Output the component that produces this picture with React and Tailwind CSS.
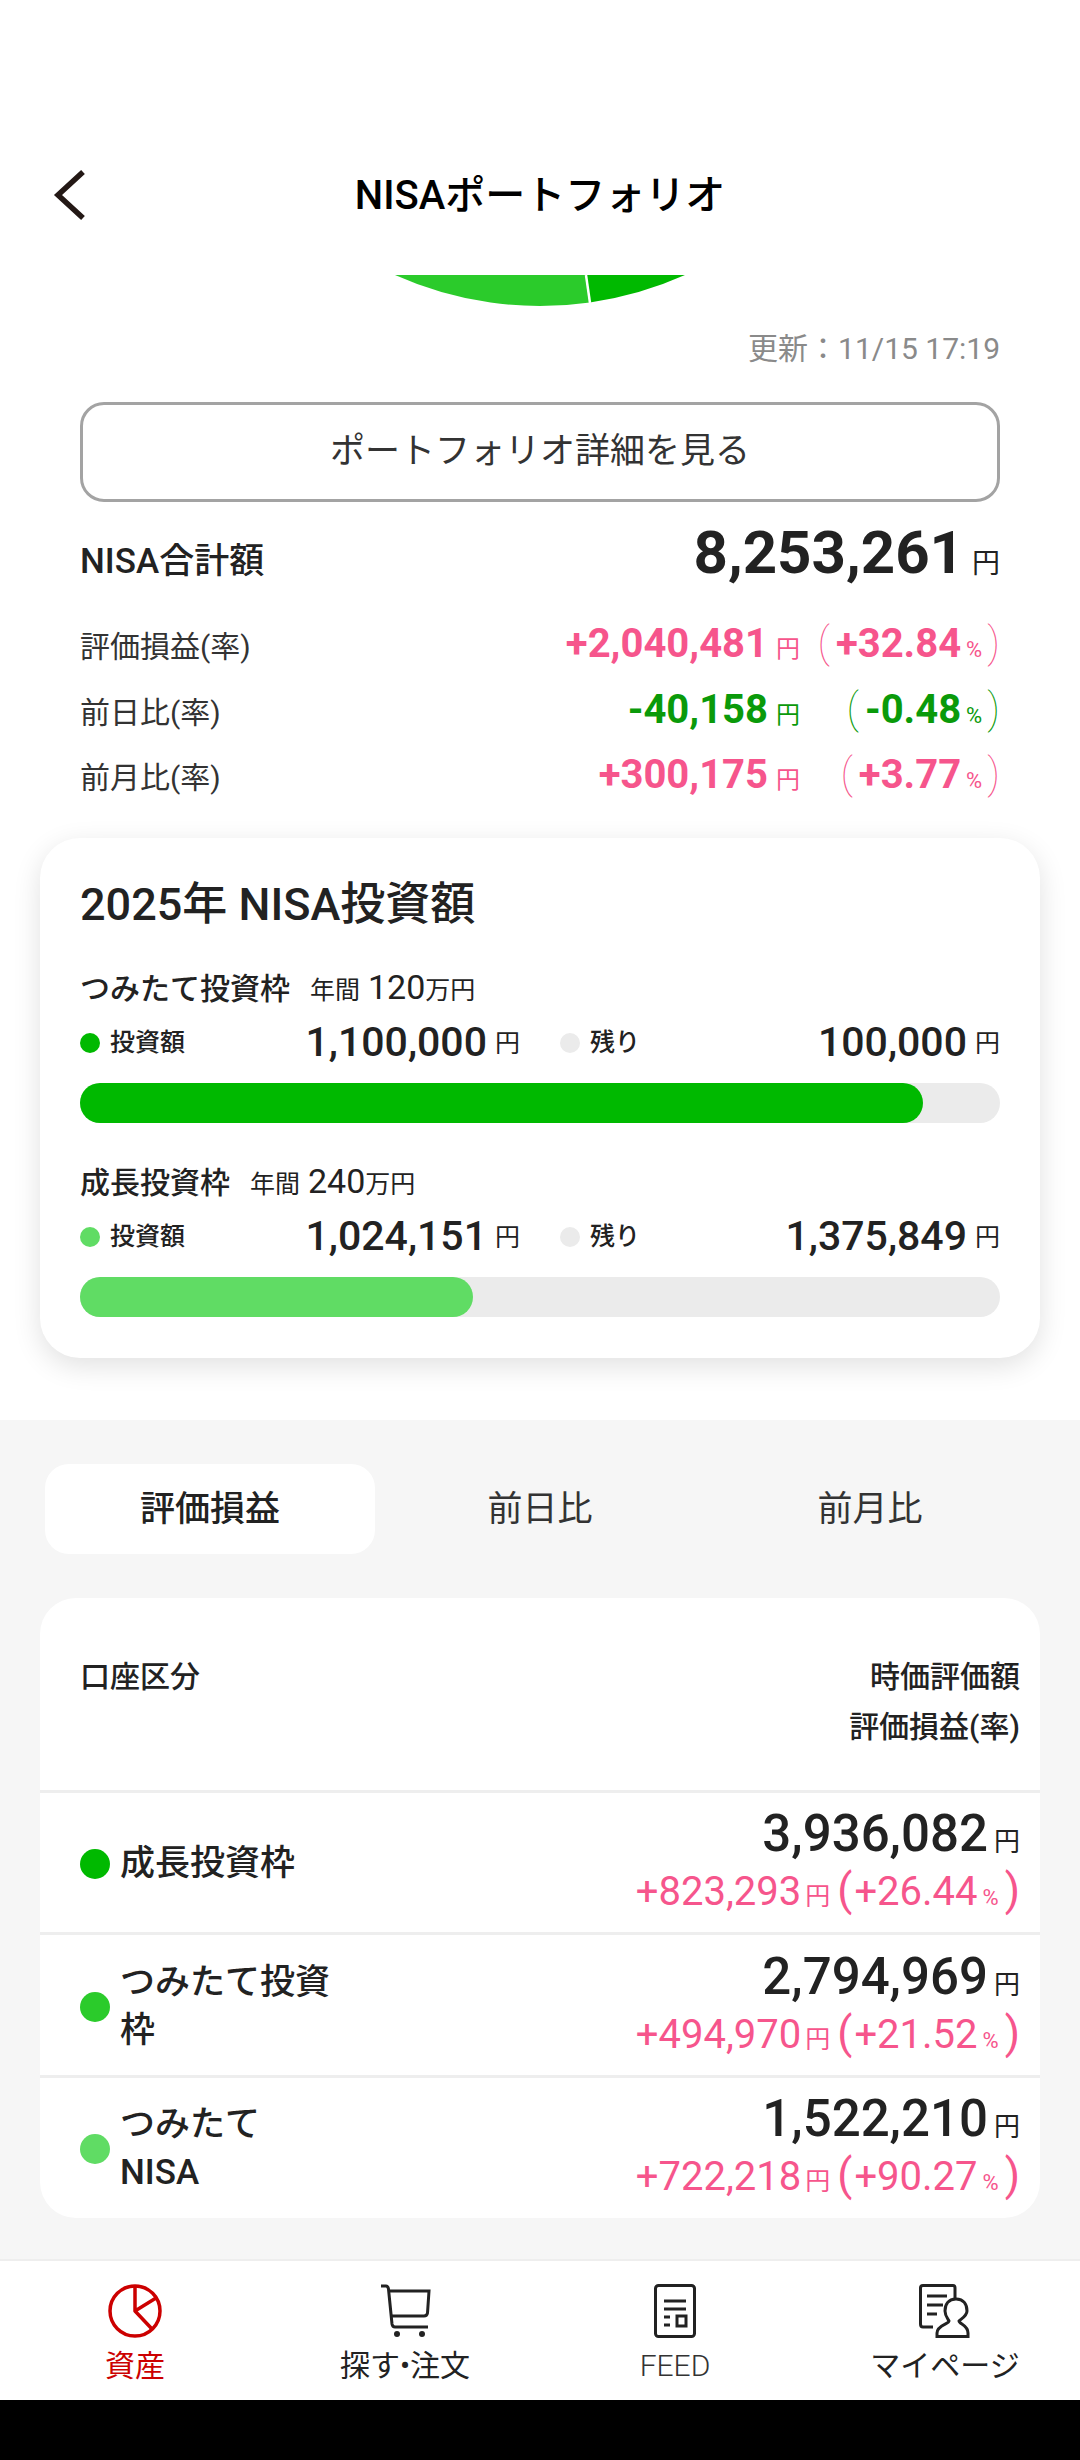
const PINK = 'text-[#f6558c]';
const GREEN = 'text-[#0a9a0a]';

const summaryRows = [
  { label: '評価損益(率)', value: '+2,040,481', rate: '+32.84', color: PINK },
  { label: '前日比(率)', value: '-40,158', rate: '-0.48', color: GREEN },
  { label: '前月比(率)', value: '+300,175', rate: '+3.77', color: PINK },
];

const holdings = [
  { name: '成長投資枠', dot: 'bg-[#00b900]', total: '3,936,082', gain: '+823,293', rate: '+26.44' },
  { name: 'つみたて投資枠', dot: 'bg-[#2bcb2b]', total: '2,794,969', gain: '+494,970', rate: '+21.52' },
  { name: 'つみたて NISA', dot: 'bg-[#60dc64]', total: '1,522,210', gain: '+722,218', rate: '+90.27' },
];

function Chart() {
  return (
    <svg viewBox="0 275 1080 36" className="block w-[1080px] h-[36px]">
      <path d="M395 275A354 354 0 0 0 590 302.4L586 275Z" fill="#2bcb2b" />
      <path d="M590 302.4A354 354 0 0 0 685 275L586 275Z" fill="#00b900" />
      <path d="M586 275L590 303" stroke="#fff" strokeWidth="2.5" />
    </svg>
  );
}

function SummaryRow({ label, value, rate, color }) {
  return (
    <div className="flex items-center justify-between h-[65.5px]">
      <span className="text-[30px] text-[#333]">{label}</span>
      <div className={`flex items-baseline leading-[60px] ${color}`}>
        <span className="text-[40px] font-bold">{value}</span>
        <span className="text-[24px] ml-[8px]">円</span>
        <span className="w-[200px] flex items-baseline justify-end">
          <span className="text-[42px] font-thin mr-[6px]">(</span>
          <span className="text-[40px] font-bold">{rate}</span>
          <span className="text-[22px] ml-[5px]">%</span>
          <span className="text-[42px] font-thin ml-[5px]">)</span>
        </span>
      </div>
    </div>
  );
}

function Legend({ dot, label, value }) {
  return (
    <div className="flex items-center h-[40px]">
      <span className={`w-[20px] h-[20px] rounded-full ${dot}`} />
      <span className="ml-[10px] text-[25px] font-medium text-[#222]">{label}</span>
      <span className="ml-auto text-[41px] font-medium text-[#222]">{value}</span>
      <span className="ml-[8px] text-[25px] text-[#222] self-end">円</span>
    </div>
  );
}

function Quota({ name, year, used, rest, dot, fill, width, className }) {
  return (
    <div className={className}>
      <div className="flex items-baseline h-[44px] text-[#222]">
        <span className="text-[30px] font-medium">{name}</span>
        <span className="ml-[20px] text-[25px]">年間</span>
        <span className="ml-[8px] text-[34px]">{year}</span>
        <span className="text-[25px]">万円</span>
      </div>
      <div className="grid grid-cols-2 gap-[40px] mt-[17px]">
        <Legend dot={dot} label="投資額" value={used} />
        <Legend dot="bg-[#ebebeb]" label="残り" value={rest} />
      </div>
      <div className="mt-[20px] h-[40px] rounded-full bg-[#ebebeb]">
        <div className={`h-full rounded-full ${fill} ${width}`} />
      </div>
    </div>
  );
}

function HoldingRow({ name, dot, total, gain, rate }) {
  return (
    <div className="flex items-center h-[142.5px] pl-[40px] pr-[20px] border-t-[3px] border-[#eeeeee]">
      <div className="flex items-center mt-[4px]">
        <span className={`w-[30px] h-[30px] rounded-full shrink-0 ${dot}`} />
        <span className="ml-[10px] w-[215px] text-[35px] leading-[48px] font-medium text-[#222]">{name}</span>
      </div>
      <div className="ml-auto flex flex-col items-end">
        <div className="flex items-baseline h-[56px] leading-[56px] text-[#222]">
          <span className="text-[51px] font-medium">{total}</span>
          <span className="ml-[6px] text-[26px]">円</span>
        </div>
        <div className={`flex items-baseline h-[56px] leading-[56px] ${PINK}`}>
          <span className="text-[40px]">{gain}</span>
          <span className="ml-[4px] text-[25px]">円</span>
          <span className="ml-[7px] text-[44px]">(</span>
          <span className="text-[40px] ml-[2px]">{rate}</span>
          <span className="ml-[5px] text-[22px]">%</span>
          <span className="ml-[6px] text-[44px]">)</span>
        </div>
      </div>
    </div>
  );
}

function PieIcon() {
  return (
    <svg width="54" height="54" viewBox="0 0 54 54" fill="none" stroke="#cc0000" strokeWidth="3.5">
      <circle cx="27" cy="27" r="25" />
      <path d="M27 2V27L44 45M27 27L48 14" strokeLinejoin="round" />
    </svg>
  );
}

function CartIcon() {
  return (
    <svg width="54" height="54" viewBox="0 0 54 54" fill="none" stroke="#222" strokeWidth="3">
      <path d="M3 2H8Q10 2 10.500 5L14 40Q14.500 43 17 43H50" />
      <path d="M11 7H51L49.500 29Q49 32 46 32H13" />
      <circle cx="19" cy="50" r="3" fill="#222" stroke="none" />
      <circle cx="44" cy="50" r="3" fill="#222" stroke="none" />
    </svg>
  );
}

function FeedIcon() {
  return (
    <svg width="42" height="54" viewBox="0 0 42 54" fill="none" stroke="#222" strokeWidth="3">
      <rect x="1.500" y="1.500" width="39" height="51" rx="3" />
      <path d="M10 17H32M10 25H32M10 33H16M10 41H16" />
      <rect x="23" y="32" width="9" height="10" strokeWidth="3" />
    </svg>
  );
}

function MyPageIcon() {
  return (
    <svg width="52" height="54" viewBox="0 0 52 54" fill="none" stroke="#222" strokeWidth="3">
      <path d="M14 43H4Q1.500 43 1.500 40V4Q1.500 1.500 4 1.500H34Q36 1.500 36 4V14" />
      <path d="M8 12H28M8 21H24M8 30H18" />
      <path d="M38 15C30 15 27 21 27 27C27 32 30 35 31 37C31 40 19 41 19 49V52.500H50V49C50 41 41 40 41 37C43 35 49 32 49 27C49 21 46 15 38 15Z" transform="translate(-1 0)" />
    </svg>
  );
}

function NavItem({ icon, label, className }) {
  return (
    <div className="flex flex-col items-center w-[270px]">
      <div className="h-[54px] flex items-center">{icon}</div>
      <span className={`mt-[8px] text-[30px] leading-[40px] ${className}`}>{label}</span>
    </div>
  );
}

export default function App() {
  return (
    <div className="w-[1080px] h-[2460px] bg-white flex flex-col overflow-hidden font-['Roboto','Noto_Sans_CJK_JP',sans-serif]">
      <header className="h-[275px] shrink-0 pt-[161px] relative">
        <svg width="34" height="52" viewBox="0 0 34 52" className="absolute left-[53px] top-[169px]" fill="none" stroke="#231815" strokeWidth="5.500">
          <path d="M30 3L5 26L30 49" />
        </svg>
        <h1 className="text-center text-[40px] leading-[70px] font-medium text-black">NISAポートフォリオ</h1>
      </header>

      <Chart />

      <div className="px-[80px]">
        <p className="mt-[20px] h-[36px] leading-[36px] text-right text-[30px] text-[#8a8a8a]">更新：11/15 17:19</p>
        <button className="mt-[35px] w-full h-[100px] rounded-[24px] border-[3px] border-[#a3a3a3] text-[35px] text-[#333]">ポートフォリオ詳細を見る</button>

        <div className="flex items-baseline justify-between h-[90px] mt-[6px] text-[#222]">
          <span className="text-[35px] font-medium">NISA合計額</span>
          <span>
            <span className="text-[60px] font-bold">8,253,261</span>
            <span className="ml-[8px] text-[28px]">円</span>
          </span>
        </div>

        <div className="mt-[16px]">
          {summaryRows.map((row) => <SummaryRow key={row.label} {...row} />)}
        </div>
      </div>

      <section className="mx-[40px] mt-[27px] h-[520px] shrink-0 rounded-[40px] bg-white shadow-[0_8px_28px_rgba(0,0,0,0.12)] px-[40px] pt-[38px]">
        <h2 className="text-[45px] leading-[58px] font-medium text-[#222]">2025年 NISA投資額</h2>
        <Quota className="mt-[28px]" name="つみたて投資枠" year="120" used="1,100,000" rest="100,000" dot="bg-[#00b900]" fill="bg-[#00b900]" width="w-[91.67%]" />
        <Quota className="mt-[33px]" name="成長投資枠" year="240" used="1,024,151" rest="1,375,849" dot="bg-[#60dc64]" fill="bg-[#60dc64]" width="w-[42.67%]" />
      </section>

      <main className="mt-[62px] flex-1 bg-[#f6f6f6] px-[40px]">
        <div className="grid grid-cols-3 mt-[44px] mx-[5px] h-[90px]">
          <div className="flex items-center justify-center pt-[3px] rounded-[24px] bg-white text-[35px] font-medium text-[#222]">評価損益</div>
          <div className="flex items-center justify-center pt-[3px] text-[35px] text-[#333]">前日比</div>
          <div className="flex items-center justify-center pt-[3px] text-[35px] text-[#333]">前月比</div>
        </div>

        <div className="mt-[44px] h-[620px] rounded-[36px] bg-white overflow-hidden">
          <div className="h-[192px] flex justify-between pl-[40px] pr-[20px] pt-[54px] text-[30px] leading-[50px] font-medium text-[#222]">
            <span>口座区分</span>
            <div className="text-right">
              <div>時価評価額</div>
              <div>評価損益(率)</div>
            </div>
          </div>
          {holdings.map((row) => <HoldingRow key={row.name} {...row} />)}
        </div>
      </main>

      <nav className="h-[141px] shrink-0 bg-white border-t-[2px] border-[#eeeeee] flex pt-[23px]">
        <NavItem icon={<PieIcon />} label="資産" className="text-[#cc0000]" />
        <NavItem icon={<CartIcon />} label="探す•注文" className="text-[#222]" />
        <NavItem icon={<FeedIcon />} label="FEED" className="text-[#333] font-light" />
        <NavItem icon={<MyPageIcon />} label="マイページ" className="text-[#222]" />
      </nav>
      <div className="h-[60px] shrink-0 bg-black" />
    </div>
  );
}
